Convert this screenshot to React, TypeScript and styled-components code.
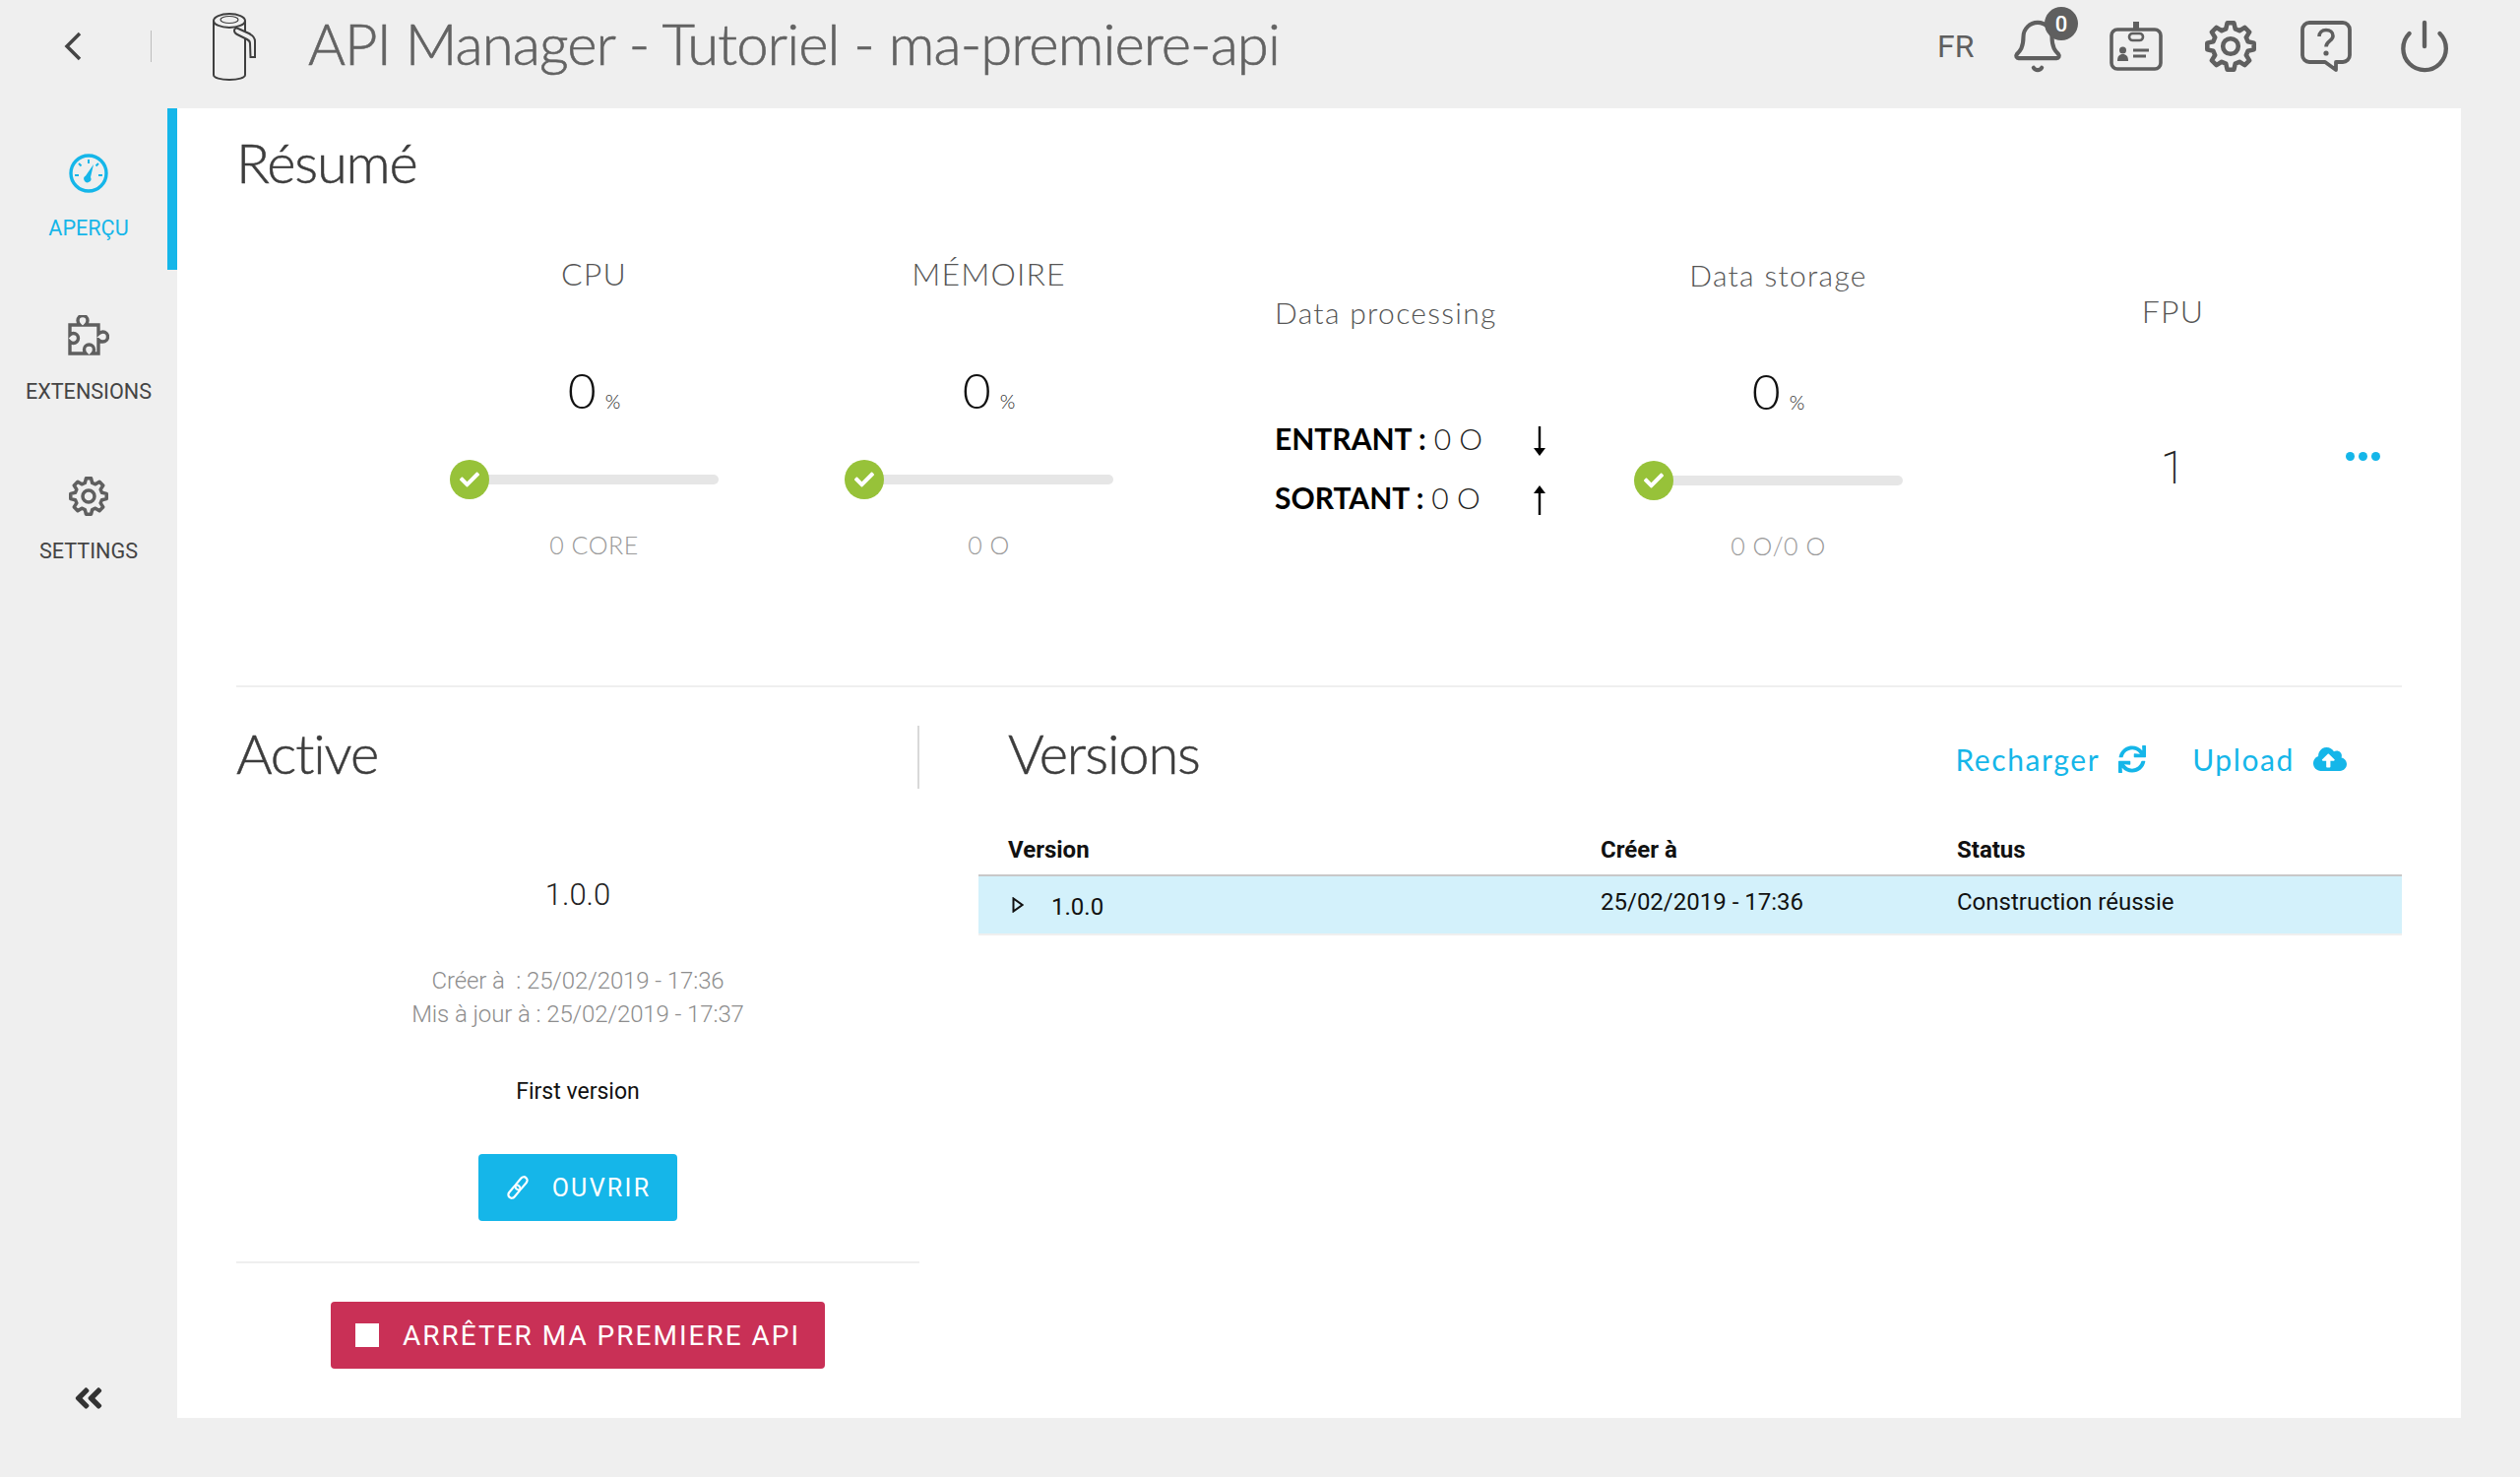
import * as React from "react";
import styled, { createGlobalStyle } from "styled-components";
import { Bell, Power } from "lucide-react";
import { FaAngleDoubleLeft, FaCheck, FaCloudUploadAlt, FaSync } from "react-icons/fa";

const BLUE = "#15b6e9";
const GREY = "#5f5f5f";

const GlobalStyles = createGlobalStyle`
  html, body {
    margin: 0;
    padding: 0;
    background: #efefef;
    font-family: Roboto, "Liberation Sans", sans-serif;
  }
`;

const Page = styled.div`
  width: 2560px;
  height: 1500px;
  overflow: hidden;
`;

const Header = styled.header`
  height: 110px;
  display: flex;
  align-items: center;
  padding: 0 68px 16px 60px;
  box-sizing: border-box;
  color: ${GREY};
`;

const BackButton = styled.div`
  width: 94px;
  height: 32px;
  padding-left: 5px;
  box-sizing: border-box;
  display: flex;
  align-items: center;
  border-right: 1px solid #bdbdbd;
`;

const Logo = styled.svg`
  margin-left: 60px;
  width: 48px;
  height: 70px;
`;

const AppTitle = styled.h1`
  margin: 0 0 0 51px;
  font-family: Lato, sans-serif;
  font-weight: 300;
  font-size: 58px;
  line-height: 72px;
  letter-spacing: -0.9px;
  color: #636363;
  flex: 1;
  -webkit-text-stroke: 0.6px #636363;
  position: relative;
  top: -3px;
`;

const Lang = styled.span`
  font-size: 32px;
  width: 78px;
  color: ${GREY};
`;

const HeaderIcon = styled.div<{ $last?: boolean }>`
  position: relative;
  width: ${(p) => (p.$last ? 58 : 97)}px;
  height: 52px;
  display: flex;
  align-items: center;
  color: ${GREY};
`;

const BellIcon = styled(Bell)`
  margin-left: -5px;
`;

const Badge = styled.span`
  position: absolute;
  left: 31px;
  top: -14px;
  width: 34px;
  height: 34px;
  border-radius: 50%;
  background: ${GREY};
  color: #fff;
  font-size: 22px;
  font-weight: 500;
  display: flex;
  align-items: center;
  justify-content: center;
`;

const Body = styled.div`
  display: flex;
  height: 1330px;
  padding-right: 60px;
`;

const Sidebar = styled.nav`
  width: 180px;
  flex: none;
  display: flex;
  flex-direction: column;
`;

const NavItem = styled.div<{ $active?: boolean }>`
  height: 164px;
  box-sizing: border-box;
  padding-top: 46px;
  display: flex;
  flex-direction: column;
  align-items: center;
  gap: 21px;
  font-size: 21.600px;
  line-height: 30px;
  color: ${(p) => (p.$active ? BLUE : "#444")};
  box-shadow: ${(p) => (p.$active ? `inset -10px 0 0 ${BLUE}` : "none")};

  svg {
    display: block;
    color: ${(p) => (p.$active ? BLUE : GREY)};
  }
`;

const Collapse = styled.div`
  margin-top: auto;
  margin-bottom: 0;
  height: 40px;
  display: flex;
  align-items: center;
  justify-content: center;
  color: #333;
  font-size: 34px;
`;

const Main = styled.main`
  flex: 1;
  background: #fff;
  padding: 0 60px;
  box-sizing: border-box;
`;

const Summary = styled.section`
  height: 588px;
  box-sizing: border-box;
  padding-top: 19px;
  border-bottom: 2px solid #efefef;
`;

const SectionTitle = styled.h2`
  margin: 0;
  font-family: Lato, sans-serif;
  font-weight: 300;
  font-size: 56px;
  line-height: 72px;
  letter-spacing: -1.1px;
  color: #3d3d3d;
  -webkit-text-stroke: 0.5px #3d3d3d;
`;

const ActiveTitle = styled(SectionTitle)`
  margin-top: -8px;
`;

const StatsGrid = styled.div`
  margin-top: 49px;
  padding-left: 163px;
  display: grid;
  grid-template-columns: repeat(5, 401px) auto;
`;

const Stat = styled.div`
  display: flex;
  flex-direction: column;
  align-items: center;
`;

const StatTitle = styled.div<{ $top?: number; $wide?: boolean }>`
  margin-top: ${(p) => p.$top ?? 0}px;
  height: 56px;
  line-height: 56px;
  font-family: Lato, sans-serif;
  font-weight: 300;
  font-size: ${(p) => (p.$wide ? 30 : 32)}px;
  letter-spacing: ${(p) => (p.$wide ? 1.3 : 1.2)}px;
  color: #555;
`;

const StatValue = styled.div`
  margin-top: 62px;
  height: 56px;
  line-height: 56px;
  font-family: Lato, sans-serif;
  font-weight: 300;
  font-size: 50px;
  color: #111;

  small {
    font-size: 20px;
    margin-left: 9px;
    color: #222;
  }
`;

const SliderBox = styled.div`
  margin-top: 43px;
  margin-left: -20px;
  width: 273px;
  height: 40px;
  position: relative;
  display: flex;
  align-items: center;
`;

const Track = styled.div`
  width: 100%;
  height: 10px;
  border-radius: 5px;
  background: #e6e6e6;
`;

const Knob = styled.div`
  position: absolute;
  left: 0;
  top: 0;
  width: 40px;
  height: 40px;
  border-radius: 50%;
  background: #97c239;
  color: #fff;
  font-size: 20px;
  display: flex;
  align-items: center;
  justify-content: center;
`;

const StatHint = styled.div`
  margin-top: 28px;
  height: 36px;
  line-height: 36px;
  font-family: Lato, sans-serif;
  font-weight: 300;
  font-size: 25px;
  letter-spacing: 0.5px;
  color: #999;
`;

const Processing = styled.div`
  padding-left: 90px;
  display: flex;
  flex-direction: column;
`;

const FlowRows = styled.div`
  margin-top: 70px;
  display: flex;
  flex-direction: column;
`;

const FlowRow = styled.div`
  height: 60px;
  display: flex;
  align-items: center;
  font-family: Lato, sans-serif;
  font-size: 30px;
  font-weight: 300;
  color: #222;

  b {
    font-weight: 700;
    color: #000;
    margin-right: 8px;
  }

  svg {
    margin-left: auto;
    margin-right: 36px;
    margin-top: 6px;
  }
`;

const FpuValue = styled.div`
  margin-top: 103px;
  height: 56px;
  line-height: 56px;
  font-weight: 200;
  font-size: 46px;
  color: #222;
`;

const Dots = styled.div`
  margin: 209px 0 0 -25px;
  display: flex;
  gap: 4px;

  i {
    width: 9px;
    height: 9px;
    border-radius: 50%;
    background: ${BLUE};
  }
`;

const Lower = styled.section`
  display: grid;
  grid-template-columns: 694px 1fr;
  column-gap: 60px;
`;

const ActiveCol = styled.div`
  display: flex;
  flex-direction: column;
  align-items: center;
`;

const ActiveHead = styled.div`
  align-self: stretch;
  margin-top: 39px;
  height: 64px;
  border-right: 2px solid #d9d9d9;
`;

const VersionNumber = styled.div`
  margin-top: 88px;
  font-weight: 300;
  font-size: 31px;
  line-height: 40px;
  color: #222;
`;

const Dates = styled.div`
  margin-top: 50px;
  font-size: 24px;
  font-weight: 300;
  line-height: 34px;
  text-align: center;
  color: #8d8d8d;
  white-space: pre;
  letter-spacing: -0.1px;
`;

const Description = styled.div`
  margin-top: 47px;
  font-size: 23px;
  line-height: 30px;
  color: #111;
`;

const Button = styled.div<{ $danger?: boolean }>`
  display: flex;
  align-items: center;
  justify-content: center;
  height: 68px;
  border-radius: 4px;
  box-sizing: border-box;
  color: #fff;
  font-size: ${(p) => (p.$danger ? 28 : 25)}px;
  letter-spacing: ${(p) => (p.$danger ? 2 : 2.300)}px;
  background: ${(p) => (p.$danger ? "#c93056" : BLUE)};
  width: ${(p) => (p.$danger ? 502 : 202)}px;
  gap: ${(p) => (p.$danger ? 24 : 22)}px;
`;

const OpenButton = styled(Button)`
  margin-top: 48px;
`;

const StopSquare = styled.span`
  width: 24px;
  height: 24px;
  background: #fff;
`;

const ActiveDivider = styled.div`
  align-self: stretch;
  margin-top: 41px;
  border-top: 2px solid #efefef;
`;

const StopButton = styled(Button)`
  margin-top: 39px;
`;

const VersionsCol = styled.div`
  display: flex;
  flex-direction: column;
`;

const VersionsHead = styled.div`
  margin-top: 31px;
  height: 72px;
  padding: 0 56px 0 30px;
  display: flex;
  align-items: center;
`;

const ActionLink = styled.a<{ $first?: boolean }>`
  margin-left: ${(p) => (p.$first ? "auto" : "47px")};
  display: flex;
  align-items: center;
  gap: 19px;
  font-family: Lato, sans-serif;
  font-size: 30px;
  letter-spacing: 1.600px;
  color: ${BLUE};
  padding-top: 12px;
`;

const TableRow = styled.div<{ $head?: boolean }>`
  display: grid;
  grid-template-columns: 632px 362px 1fr;
  align-items: center;
  height: ${(p) => (p.$head ? 50 : 58)}px;
  font-size: 24px;
  color: #111;
  font-weight: ${(p) => (p.$head ? 700 : 400)};
  background: ${(p) => (p.$head ? "transparent" : "#d3f1fb")};
  border-bottom: 2px solid ${(p) => (p.$head ? "#c8c8c8" : "#efefef")};
`;

const TableHead = styled(TableRow)`
  margin-top: 37px;
`;

const VersionCell = styled.div<{ $head?: boolean }>`
  padding-left: ${(p) => (p.$head ? 30 : 34)}px;
  display: flex;
  align-items: center;
  gap: 28px;
`;

const VersionLabel = styled.span`
  padding-top: 4px;
`;

const RowCell = styled.div`
  padding-bottom: 6px;
`;

const gearPath = (cx: number, cy: number, outer: number, inner: number, teeth: number) => {
  const pts: string[] = [];
  const step = (Math.PI * 2) / teeth;
  for (let i = 0; i < teeth; i++) {
    const a = i * step - Math.PI / 2;
    [
      [a - step * 0.18, outer],
      [a + step * 0.18, outer],
      [a + step * 0.34, inner],
      [a + step * 0.66, inner],
    ].forEach(([ang, r]) => {
      pts.push(`${(cx + r * Math.cos(ang)).toFixed(2)} ${(cy + r * Math.sin(ang)).toFixed(2)}`);
    });
  }
  return `M${pts.join("L")}Z`;
};

const GearIcon = ({ size }: { size: number }) => (
  <svg width={size} height={size} viewBox="0 0 50 50" fill="none" stroke="currentColor" strokeWidth="4.4" strokeLinejoin="round">
    <path d={gearPath(25, 25, 23, 17.5, 8)} />
    <circle cx="25" cy="25" r="7.5" />
  </svg>
);

const GaugeIcon = () => (
  <svg width="40" height="40" viewBox="0 0 40 40" fill="none" stroke="currentColor">
    <circle cx="20" cy="20" r="18" strokeWidth="3.4" />
    <path d="M20 6v4M10 10l2.5 2.5M30 10l-2.5 2.5M6 22h4M30 22h4" strokeWidth="2" />
    <path d="M25 11l-3 13a3.6 3.6 0 1 1-5-1.4z" fill="currentColor" stroke="none" />
  </svg>
);

const PuzzleIcon = () => (
  <svg width="42" height="42" viewBox="0 0 42 42" fill="none" stroke="currentColor" strokeWidth="3.4">
    <path d="M2 10h10c-1.500-1.500-2-3-2-4.500a5 5 0 0 1 10 0c0 1.500-.5 3-2 4.500h13v9c1.500-1.500 3-2 4.500-2a5 5 0 0 1 0 10c-1.500 0-3-.5-4.500-2v14H25c1-1 1.500-2.500 1.500-4a5 5 0 0 0-10 0c0 1.500.5 3 1.500 4H2V27c1 1 2 1.500 3.500 1.500a5 5 0 0 0 0-10c-1.500 0-2.500.5-3.500 1.500z" />
  </svg>
);

const LogoCan = () => (
  <Logo viewBox="0 0 48 70" fill="none" stroke="#3f3f3f" strokeWidth="2">
    <ellipse cx="19" cy="9" rx="16" ry="7" />
    <ellipse cx="19" cy="8" rx="9" ry="3.500" strokeWidth="1.200" />
    <path d="M3 9v55c0 3 7 5 16 5s16-2 16-5V9" />
    <path d="M24 19c0-2 2-3 4-2l11 5c4 2 6 4 6 8v16h-4.500l-.5-14c0-2-1-3-3-4l-10-5c-2-1-3-2-3-4z" fill="#efefef" />
  </Logo>
);

const IdBadgeIcon = () => (
  <svg width="54" height="50" viewBox="0 0 54 50" fill="none" stroke="currentColor" strokeWidth="3.6">
    <rect x="2" y="8" width="50" height="40" rx="6" />
    <path d="M27 0v9" strokeWidth="6" />
    <rect x="20" y="12" width="14" height="7" rx="3.500" strokeWidth="2.600" />
    <circle cx="13.500" cy="29" r="3.500" fill="currentColor" stroke="none" />
    <path d="M8 40c0-5 2-7 5.500-7s5.500 2 5.500 7z" fill="currentColor" stroke="none" />
    <path d="M24 29h16M24 35h13" strokeWidth="2.800" />
  </svg>
);

const HelpIcon = () => (
  <svg width="52" height="52" viewBox="0 0 52 52" fill="none" stroke="currentColor" strokeWidth="3.8" strokeLinejoin="round">
    <path d="M9 2h34a7 7 0 0 1 7 7v26a7 7 0 0 1-7 7h-7v8l-11-8H9a7 7 0 0 1-7-7V9a7 7 0 0 1 7-7z" />
    <path d="M19 16c0-4 3-6.500 7-6.500s7 2.500 7 6c0 5-7 5.500-7 11" strokeWidth="3.600" />
    <circle cx="26" cy="33" r="2.600" fill="currentColor" stroke="none" />
  </svg>
);

const LinkIcon = () => (
  <svg width="26" height="26" viewBox="0 0 26 26" fill="none" stroke="#fff" strokeWidth="2.200">
    <g transform="rotate(-50 13 13)">
      <rect x="0" y="9.500" width="15" height="7" rx="3.500" />
      <rect x="11" y="9.500" width="15" height="7" rx="3.500" />
    </g>
  </svg>
);

const Arrow = ({ up }: { up?: boolean }) => (
  <svg width="12" height="30" viewBox="0 0 12 30" fill="#000" style={up ? { transform: "rotate(180deg)" } : undefined}>
    <path d="M4.800 0h2.400v22H12l-6 8-6-8h4.800z" />
  </svg>
);

const PlayOutline = () => (
  <svg width="12" height="16" viewBox="0 0 12 16" fill="none" stroke="#111" strokeWidth="2">
    <path d="M1.500 1.500v13L10.500 8z" />
  </svg>
);

const GaugeStat = ({ title, hint, top = 0, wide }: { title: string; hint: string; top?: number; wide?: boolean }) => (
  <Stat>
    <StatTitle $top={top} $wide={wide}>{title}</StatTitle>
    <StatValue>
      0<small>%</small>
    </StatValue>
    <SliderBox>
      <Track />
      <Knob>
        <FaCheck />
      </Knob>
    </SliderBox>
    <StatHint>{hint}</StatHint>
  </Stat>
);

const App: React.FC = () => {
  return (
    <Page>
      <GlobalStyles />
      <Header>
        <BackButton>
          <svg width="20" height="30" viewBox="0 0 20 30" fill="none" stroke="#444" strokeWidth="3.500">
            <path d="M16 2L3 15l13 13" />
          </svg>
        </BackButton>
        <LogoCan />
        <AppTitle>API Manager - Tutoriel - ma-premiere-api</AppTitle>
        <Lang>FR</Lang>
        <HeaderIcon>
          <BellIcon size={58} strokeWidth={1.7} />
          <Badge>0</Badge>
        </HeaderIcon>
        <HeaderIcon>
          <IdBadgeIcon />
        </HeaderIcon>
        <HeaderIcon>
          <GearIcon size={52} />
        </HeaderIcon>
        <HeaderIcon>
          <HelpIcon />
        </HeaderIcon>
        <HeaderIcon $last>
          <Power size={58} strokeWidth={1.800} />
        </HeaderIcon>
      </Header>
      <Body>
        <Sidebar>
          <NavItem $active>
            <GaugeIcon />
            <span>APERÇU</span>
          </NavItem>
          <NavItem>
            <PuzzleIcon />
            <span>EXTENSIONS</span>
          </NavItem>
          <NavItem>
            <GearIcon size={40} />
            <span>SETTINGS</span>
          </NavItem>
          <Collapse>
            <FaAngleDoubleLeft />
          </Collapse>
        </Sidebar>
        <Main>
          <Summary>
            <SectionTitle>Résumé</SectionTitle>
            <StatsGrid>
              <GaugeStat title="CPU" hint="0 CORE" />
              <GaugeStat title="MÉMOIRE" hint="0 O" />
              <Processing>
                <StatTitle $top={39} $wide>Data processing</StatTitle>
                <FlowRows>
                  <FlowRow>
                    <b>ENTRANT :</b> 0 O
                    <Arrow />
                  </FlowRow>
                  <FlowRow>
                    <b>SORTANT :</b> 0 O
                    <Arrow up />
                  </FlowRow>
                </FlowRows>
              </Processing>
              <GaugeStat title="Data storage" hint="0 O/0 O" top={1} wide />
              <Stat>
                <StatTitle $top={38}>FPU</StatTitle>
                <FpuValue>1</FpuValue>
              </Stat>
              <Dots>
                <i />
                <i />
                <i />
              </Dots>
            </StatsGrid>
          </Summary>
          <Lower>
            <ActiveCol>
              <ActiveHead>
                <ActiveTitle>Active</ActiveTitle>
              </ActiveHead>
              <VersionNumber>1.0.0</VersionNumber>
              <Dates>{"Créer à  : 25/02/2019 - 17:36\nMis à jour à : 25/02/2019 - 17:37"}</Dates>
              <Description>First version</Description>
              <OpenButton>
                <LinkIcon />
                OUVRIR
              </OpenButton>
              <ActiveDivider />
              <StopButton $danger>
                <StopSquare />
                ARRÊTER MA PREMIERE API
              </StopButton>
            </ActiveCol>
            <VersionsCol>
              <VersionsHead>
                <SectionTitle>Versions</SectionTitle>
                <ActionLink $first>
                  Recharger <FaSync size={28} />
                </ActionLink>
                <ActionLink>
                  Upload <FaCloudUploadAlt size={34} />
                </ActionLink>
              </VersionsHead>
              <TableHead $head>
                <VersionCell $head>Version</VersionCell>
                <div>Créer à</div>
                <div>Status</div>
              </TableHead>
              <TableRow>
                <VersionCell>
                  <PlayOutline />
                  <VersionLabel>1.0.0</VersionLabel>
                </VersionCell>
                <RowCell>25/02/2019 - 17:36</RowCell>
                <RowCell>Construction réussie</RowCell>
              </TableRow>
            </VersionsCol>
          </Lower>
        </Main>
      </Body>
    </Page>
  );
};

export default App;
